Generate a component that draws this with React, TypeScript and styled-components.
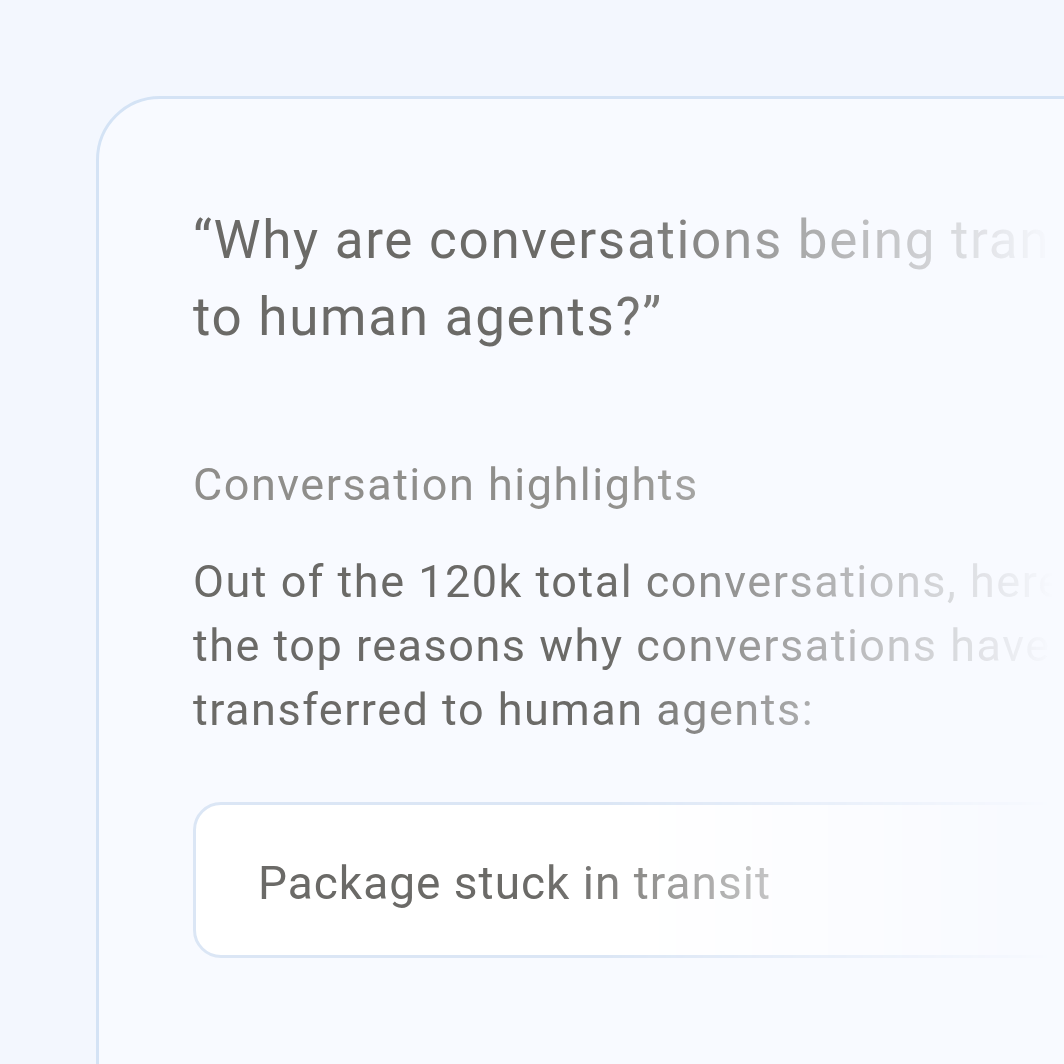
import React from "react";
import styled, { createGlobalStyle } from "styled-components";

const Global = createGlobalStyle`
  html, body {
    margin: 0;
    padding: 0;
    overflow: hidden;
    background: #f3f7fe;
  }
  body {
    font-family: Roboto, "Liberation Sans", sans-serif;
  }
`;

const Page = styled.div`
  width: 1064px;
  height: 1064px;
  box-sizing: border-box;
  padding: 96px 0 0 96px;
  background: #f3f7fe;
  overflow: hidden;
`;

const Card = styled.section`
  width: 1120px;
  height: 1120px;
  box-sizing: border-box;
  border: 3px solid #d4e3f5;
  border-radius: 64px 0 0 0;
  background: #f8faff;
  padding: 103px 0 0 94px;
`;

const Content = styled.div`
  display: flex;
  flex-direction: column;
  width: 1000px;
  -webkit-mask-image: linear-gradient(to right, #000 410px, transparent 860px);
  mask-image: linear-gradient(to right, #000 410px, transparent 860px);
`;

const Question = styled.h1`
  margin: 0;
  font-size: 53px;
  line-height: 77px;
  font-weight: 400;
  letter-spacing: 1.7px;
  color: #6b6a67;
  white-space: nowrap;
`;

const SectionTitle = styled.h2`
  margin: 97px 0 0;
  font-size: 45px;
  line-height: 64px;
  font-weight: 400;
  letter-spacing: 1.5px;
  color: #8f8e8b;
  white-space: nowrap;
`;

const Body = styled.p`
  margin: 33px 0 0;
  font-size: 45px;
  line-height: 64px;
  font-weight: 400;
  letter-spacing: 1.5px;
  color: #6b6a67;
  white-space: nowrap;
`;

const Reason = styled.div`
  margin-top: 60px;
  height: 156px;
  box-sizing: border-box;
  display: flex;
  align-items: center;
  padding: 6px 0 0 62px;
  border: 3px solid #dbe6f5;
  border-radius: 28px;
  background: #ffffff;
  font-size: 46px;
  letter-spacing: 1px;
  color: #6b6a67;
  white-space: nowrap;
`;

const ReasonLabel = styled.span`
  display: inline-block;
  -webkit-mask-image: linear-gradient(to right, #000 280px, rgba(0, 0, 0, 0.6) 520px);
  mask-image: linear-gradient(to right, #000 280px, rgba(0, 0, 0, 0.6) 520px);
`;

export default function App() {
  return (
    <Page>
      <Global />
      <Card>
        <Content>
          <Question>
            “Why are conversations being transferred
            <br />
            to human agents?”
          </Question>
          <SectionTitle>Conversation highlights</SectionTitle>
          <Body>
            Out of the 120k total conversations, here are
            <br />
            the top reasons why conversations have been
            <br />
            transferred to human agents:
          </Body>
          <Reason>
            <ReasonLabel>Package stuck in transit</ReasonLabel>
          </Reason>
        </Content>
      </Card>
    </Page>
  );
}
